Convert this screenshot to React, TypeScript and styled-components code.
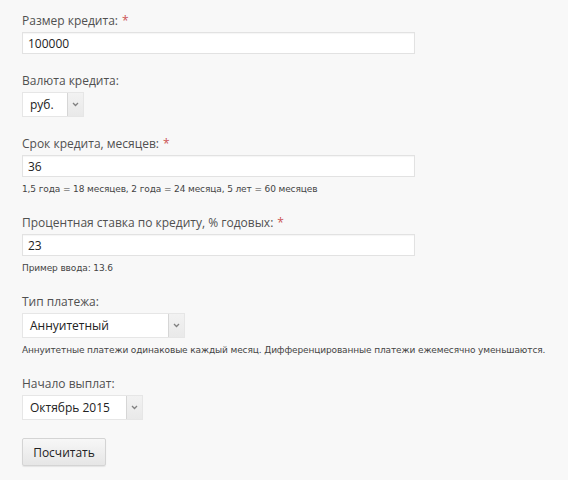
import React from 'react';
import styled, { createGlobalStyle } from 'styled-components';

const GlobalStyle = createGlobalStyle`
  html, body {
    margin: 0;
    padding: 0;
    background: #f8f8f8;
  }
  body {
    font-family: 'Open Sans', 'DejaVu Sans', sans-serif;
    color: #333;
  }
`;

const Form = styled.form`
  display: flex;
  flex-direction: column;
  align-items: flex-start;
  padding: 12px 22px 0;
  width: 568px;
  height: 480px;
  box-sizing: border-box;
`;

const Field = styled.div`
  display: flex;
  flex-direction: column;
  align-items: flex-start;
  margin-bottom: 18px;
`;

const Label = styled.label`
  font-size: 12px;
  line-height: 18px;
  color: #505050;
  margin-bottom: 2px;
`;

const Required = styled.span`
  color: #c55;
  margin-left: 4px;
`;

const TextInput = styled.input`
  width: 393px;
  height: 22px;
  box-sizing: border-box;
  border: 1px solid #e2e2e2;
  box-shadow: inset 0 1px 1px rgba(0, 0, 0, 0.04);
  background: #fff;
  padding: 0 5px;
  font-family: 'Open Sans', 'DejaVu Sans', sans-serif;
  font-size: 12px;
  color: #222;
  outline: none;
`;

const Hint = styled.div`
  font-family: 'DejaVu Sans', sans-serif;
  font-size: 9px;
  line-height: 14px;
  letter-spacing: -0.12px;
  white-space: nowrap;
  color: #444;
  margin-top: 5px;
`;

const SelectBox = styled.div<{ $width: number }>`
  display: flex;
  width: ${p => p.$width}px;
  height: 25px;
  box-sizing: border-box;
  border: 1px solid #e6e6e6;
  background: #fff;
`;

const SelectValue = styled.div`
  flex: 1;
  display: flex;
  align-items: center;
  padding-left: 7px;
  font-size: 12px;
  color: #222;
`;

const SelectArrow = styled.div`
  width: 15px;
  display: flex;
  align-items: center;
  justify-content: center;
  background: linear-gradient(#f2f2f2, #e9e9e9);
  border-left: 1px solid #d6d6d6;
`;

const Button = styled.button`
  height: 28px;
  width: 84px;
  padding: 0;
  border: 1px solid #d4d4d4;
  border-radius: 2px;
  background: linear-gradient(#f7f7f7, #e6e6e6);
  box-shadow: 0 1px 1px rgba(0, 0, 0, 0.08);
  font-family: 'Open Sans', 'DejaVu Sans', sans-serif;
  font-size: 12px;
  color: #222;
  cursor: pointer;
`;

const Chevron = () => (
  <svg width="7" height="5" viewBox="0 0 7 5">
    <path d="M1 1 L3.5 3.5 L6 1" fill="none" stroke="#808080" strokeWidth="1.3" />
  </svg>
);

const Select = ({ value, width }: { value: string; width: number }) => (
  <SelectBox $width={width}>
    <SelectValue>{value}</SelectValue>
    <SelectArrow>
      <Chevron />
    </SelectArrow>
  </SelectBox>
);

const App: React.FC = () => {
  return (
    <>
      <GlobalStyle />
      <Form>
        <Field>
          <Label>
            Размер кредита:<Required>*</Required>
          </Label>
          <TextInput defaultValue="100000" />
        </Field>
        <Field>
          <Label>Валюта кредита:</Label>
          <Select value="руб." width={62} />
        </Field>
        <Field>
          <Label>
            Срок кредита, месяцев:<Required>*</Required>
          </Label>
          <TextInput defaultValue="36" />
          <Hint>1,5 года = 18 месяцев, 2 года = 24 месяца, 5 лет = 60 месяцев</Hint>
        </Field>
        <Field>
          <Label>
            Процентная ставка по кредиту, % годовых:<Required>*</Required>
          </Label>
          <TextInput defaultValue="23" />
          <Hint>Пример ввода: 13.6</Hint>
        </Field>
        <Field>
          <Label>Тип платежа:</Label>
          <Select value="Аннуитетный" width={163} />
          <Hint>
            Аннуитетные платежи одинаковые каждый месяц. Дифференцированные платежи ежемесячно уменьшаются.
          </Hint>
        </Field>
        <Field>
          <Label>Начало выплат:</Label>
          <Select value="Октябрь 2015" width={121} />
        </Field>
        <Button type="button">Посчитать</Button>
      </Form>
    </>
  );
};

export default App;
